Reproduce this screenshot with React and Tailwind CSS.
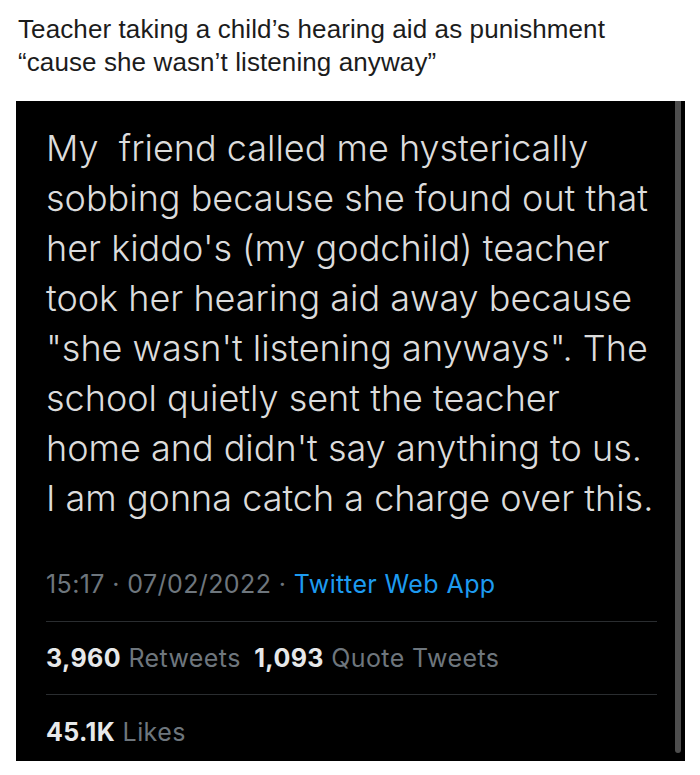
import React from "react";

const tweetLines = [
  "My  friend called me hysterically",
  "sobbing because she found out that",
  "her kiddo's (my godchild) teacher",
  "took her hearing aid away because",
  "\"she wasn't listening anyways\". The",
  "school quietly sent the teacher",
  "home and didn't say anything to us.",
  "I am gonna catch a charge over this.",
];

export default function App() {
  return (
    <div className="w-[700px] h-[775px] bg-white overflow-hidden">
      {/* Caption */}
      <div
        className="pl-[18px] pt-[13px] text-[26px] leading-[33px] text-[#1c1c1c] tracking-[0.1px]"
        style={{ fontFamily: '"Liberation Sans", Arial, sans-serif' }}
      >
        <p>Teacher taking a child’s hearing aid as punishment</p>
        <p>“cause she wasn’t listening anyway”</p>
      </div>

      {/* Tweet screenshot */}
      <div className="relative mt-[22px] ml-[16px] w-[669px] h-[660px] bg-black">
        <div className="absolute right-[4px] top-0 w-[6px] h-[652px] rounded-b-full bg-[#4d4d4d]" />

        <div className="pl-[30px] pr-[28px] pt-[22px]">
          <div
            className="text-[36px] leading-[50px] font-light text-[#dcdcdc] whitespace-pre"
            style={{ fontFamily: 'Inter, "Noto Sans", sans-serif' }}
          >
            {tweetLines.map((line, i) => (
              <div key={i}>{line}</div>
            ))}
          </div>

          <div className="tracking-[0.4px]" style={{ fontFamily: 'Inter, "Noto Sans", sans-serif' }}>
            <div className="mt-[45px] pb-[21px] border-b border-[#2a2d30] text-[25px] leading-[32px] text-[#6e767d]">
              15:17 · 07/02/2022 · <span className="text-[#1d9bf0]">Twitter Web App</span>
            </div>
            <div className="py-[20px] border-b border-[#2a2d30] text-[25px] leading-[32px] text-[#6e767d]">
              <span className="font-bold text-[#e7e9ea]">3,960</span> Retweets{" "}
              <span className="ml-[6px] font-bold text-[#e7e9ea]">1,093</span> Quote Tweets
            </div>
            <div className="pt-[21px] text-[25px] leading-[32px] text-[#6e767d]">
              <span className="font-bold text-[#e7e9ea]">45.1K</span> Likes
            </div>
          </div>
        </div>
      </div>
    </div>
  );
}
